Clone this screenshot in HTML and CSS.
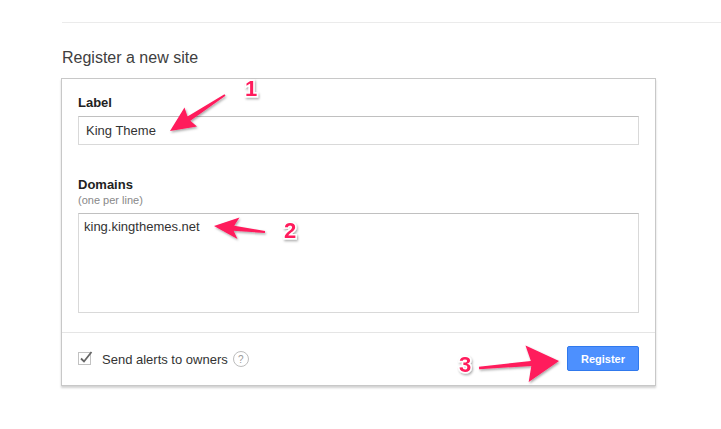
FILE: index.html
```html
<!DOCTYPE html>
<html lang="en">
<head>
    <meta charset="UTF-8">
    <title>Register a new site</title>
    <link rel="stylesheet" href="styles.css">
</head>
<body>
    <div class="page">
        <div class="rule"></div>

        <h2 class="title">Register a new site</h2>

        <div class="card">
            <div class="fields">
                <label class="field-label" for="label">Label</label>
                <input class="text-input" id="label" type="text" value="King Theme">

                <label class="field-label domains" for="domains">Domains</label>
                <div class="hint">(one per line)</div>
                <textarea class="text-area" id="domains">king.kingthemes.net</textarea>
            </div>

            <div class="footer">
                <label class="alerts">
                    <span class="check">
                        <svg width="16" height="16" viewBox="0 0 16 16">
                            <rect x="0.5" y="2.5" width="12" height="12" fill="#fff" stroke="#c2c2c2"/>
                            <path d="M3 8.5 L6 11.5 L13.5 2" fill="none" stroke="#666" stroke-width="1.8"/>
                        </svg>
                    </span>
                    Send alerts to owners
                    <span class="help">?</span>
                </label>
                <button class="register" type="button">Register</button>
            </div>
        </div>
    </div>

    <!-- annotation arrows drawn over the form -->
    <svg class="marks" width="721" height="429" viewBox="0 0 721 429">
        <defs>
            <filter id="shade" x="-20%" y="-20%" width="140%" height="140%">
                <feDropShadow dx="1" dy="1.5" stdDeviation="1" flood-color="#000" flood-opacity="0.35"/>
            </filter>
        </defs>
        <g fill="#ff1a5b" filter="url(#shade)">
            <polygon points="170,131 197,126.5 190.3,120.7 225.5,95.8 224.5,94.2 187.5,116.5 184.5,107.5"/>
            <polygon points="214,226 239.5,217.5 234.2,225.8 265.1,231 264.9,233 233.6,230.8 237.5,239"/>
            <polygon points="559,361 528.7,382 531.3,365.9 479.1,369.2 478.9,366.8 530.9,360.9 525.5,345.5"/>
        </g>
        <g class="num" filter="url(#shade)">
            <text x="251" y="96">1</text>
            <text x="290" y="238">2</text>
            <text x="465" y="372">3</text>
        </g>
    </svg>
</body>
</html>
```

FILE: styles.css
```css
body {
    margin: 0;
    padding: 0;
    background-color: #fff;
    font-family: "Liberation Sans", Arial, sans-serif;
    color: #333;
    position: relative;
    width: 721px;
    height: 429px;
    overflow: hidden;
}

.page {
    padding-left: 61px;
}

.rule {
    margin-top: 22px;
    margin-left: 1px;
    height: 1px;
    background-color: #ebebeb;
}

.title {
    margin: 25px 0 10px 1px;
    font-size: 16px;
    line-height: 20px;
    font-weight: normal;
    color: #404040;
}

.card {
    width: 593px;
    border: 1px solid #c8c8c8;
    box-shadow: 0 2px 2px rgba(0, 0, 0, 0.18);
    background-color: #fff;
}

.fields {
    padding: 16px 16px 19px;
    display: flex;
    flex-direction: column;
}

.field-label {
    font-size: 13px;
    line-height: 16px;
    font-weight: bold;
    color: #222;
    margin-bottom: 5px;
}

.field-label.domains {
    margin-top: 32px;
    margin-bottom: 0;
}

.hint {
    font-size: 11px;
    line-height: 14px;
    color: #888;
    margin-bottom: 6px;
}

.text-input {
    box-sizing: border-box;
    width: 561px;
    height: 29px;
    margin: 0;
    padding: 0 7px;
    border: 1px solid #d9d9d9;
    border-top-color: #c0c0c0;
    font-family: inherit;
    font-size: 13px;
    color: #333;
    outline: none;
}

.text-area {
    box-sizing: border-box;
    width: 561px;
    height: 100px;
    margin: 0;
    padding: 5px;
    border: 1px solid #d9d9d9;
    border-top-color: #c0c0c0;
    font-family: inherit;
    font-size: 13px;
    line-height: 16px;
    color: #333;
    resize: none;
    outline: none;
}

.footer {
    height: 52px;
    border-top: 1px solid #e5e5e5;
    padding: 0 16px 0 16px;
    display: flex;
    align-items: center;
    justify-content: space-between;
}

.alerts {
    display: flex;
    align-items: center;
    font-size: 13px;
    color: #333;
}

.check {
    display: flex;
    margin-right: 8px;
    margin-top: -2px;
}

.help {
    display: inline-flex;
    align-items: center;
    justify-content: center;
    box-sizing: border-box;
    width: 16px;
    height: 16px;
    margin-left: 5px;
    border: 1px solid #bdbdbd;
    border-radius: 50%;
    font-size: 10px;
    color: #999;
}

.register {
    box-sizing: border-box;
    width: 72px;
    height: 25px;
    margin-top: -1px;
    padding: 0;
    border: 1px solid #3079ed;
    border-radius: 2px;
    background-color: #4d90fe;
    color: #fff;
    font-family: inherit;
    font-size: 11px;
    font-weight: bold;
}

.marks {
    position: absolute;
    top: 0;
    left: 0;
    pointer-events: none;
}

.num text {
    font-family: "Liberation Sans", Arial, sans-serif;
    font-size: 22px;
    font-weight: bold;
    text-anchor: middle;
    fill: #ff1a5b;
    stroke: #fff;
    stroke-width: 3px;
    paint-order: stroke;
}
```
